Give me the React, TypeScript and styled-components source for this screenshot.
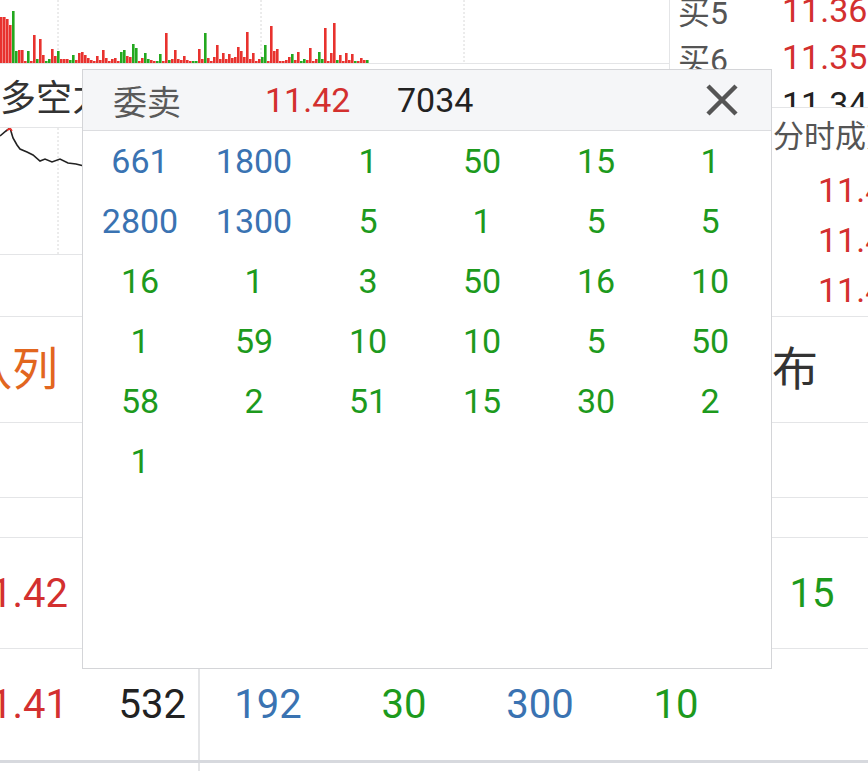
import styled, { createGlobalStyle } from 'styled-components';

const GlobalStyle = createGlobalStyle`
  * { box-sizing: border-box; }
  html, body { margin: 0; padding: 0; background: #fff; }
  body { font-family: Roboto, "Noto Sans CJK SC", sans-serif; }
`;

const RED = '#d3302f';
const GREEN = '#1d9a1d';
const BLUE = '#3a73b2';
const LINE = '#e4e5e7';

const Page = styled.div`
  position: relative;
  width: 868px;
  height: 771px;
  overflow: hidden;
  background: #fff;
`;

const TopArea = styled.div`
  display: flex;
  height: 317px;
  border-bottom: 1px solid ${LINE};
`;

const LeftChart = styled.div`
  width: 669px;
  display: flex;
  flex-direction: column;
`;

const VolumeChart = styled.div`
  height: 64px;
  border-bottom: 1px solid ${LINE};
  svg { display: block; }
`;

const LabelRow = styled.div`
  height: 64px;
  display: flex;
  align-items: center;
  padding-bottom: 2px;
  font-size: 36px;
  color: #333;
  white-space: nowrap;
  border-bottom: 1px solid ${LINE};
`;

const LineChart = styled.div`
  height: 127px;
  border-bottom: 1px solid ${LINE};
  svg { display: block; }
`;

const RightColumn = styled.div`
  flex: 1;
  display: flex;
  flex-direction: column;
  border-left: 1px solid ${LINE};
  min-width: 0;
`;

const BookList = styled.div`
  height: 108px;
  overflow: hidden;
  border-bottom: 1px solid ${LINE};
`;

const BookInner = styled.div`
  margin-top: -14px;
`;

const BookRow = styled.div`
  height: 47px;
  display: flex;
  align-items: center;
  padding-left: 8px;
  white-space: nowrap;
`;

const BookLabel = styled.span`
  width: 104px;
  font-size: 32px;
  color: #555;
`;

const Price = styled.span<{ $color: string; $size?: number }>`
  color: ${(p) => p.$color};
  font-size: ${(p) => p.$size ?? 34}px;
`;

const TradePanel = styled.div`
  padding-left: 103px;
  white-space: nowrap;
`;

const TradeTitle = styled.div`
  height: 57px;
  display: flex;
  align-items: center;
  padding-bottom: 6px;
  font-size: 31px;
  color: #555;
`;

const TradeRow = styled.div`
  height: 50px;
  display: flex;
  align-items: center;
  padding-left: 45px;
`;

const Row = styled.div<{ $h: number }>`
  height: ${(p) => p.$h}px;
  border-bottom: 1px solid ${LINE};
  display: flex;
  align-items: center;
  padding-bottom: 10px;
`;

const LeftTitle = styled.div`
  width: 58px;
  overflow: hidden;
  display: flex;
  justify-content: flex-end;
  white-space: nowrap;
  font-size: 46px;
  color: #e2661f;
`;

const RightTitle = styled.div`
  margin-left: auto;
  margin-right: 50px;
  white-space: nowrap;
  font-size: 46px;
  color: #333;
`;

const DataGrid = styled.div<{ $h: number; $thick?: boolean }>`
  height: ${(p) => p.$h}px;
  display: grid;
  grid-template-columns: 68px 132px repeat(5, 136px);
  border-bottom: ${(p) => (p.$thick ? 3 : 1)}px solid ${(p) => (p.$thick ? '#d7d9de' : LINE)};
`;

const Cell = styled.div<{ $align: 'left' | 'right' | 'center'; $color: string; $divider?: boolean }>`
  display: flex;
  align-items: center;
  justify-content: ${(p) => (p.$align === 'right' ? 'flex-end' : p.$align === 'left' ? 'flex-start' : 'center')};
  overflow: hidden;
  white-space: nowrap;
  font-size: 40px;
  color: ${(p) => p.$color};
  padding-right: ${(p) => (p.$divider ? 12 : 0)}px;
  border-right: ${(p) => (p.$divider ? `2px solid ${LINE}` : 'none')};
`;

/* popup */
const Popup = styled.div`
  position: absolute;
  left: 82px;
  top: 69px;
  width: 690px;
  height: 600px;
  background: #fff;
  border: 1px solid #d4d5d8;
  display: flex;
  flex-direction: column;
`;

const PopupHeader = styled.div`
  height: 61px;
  flex-shrink: 0;
  display: flex;
  align-items: center;
  padding-left: 30px;
  padding-right: 31px;
  background: #f5f6f8;
  border-bottom: 1px solid #dcdde0;
`;

const HeaderLabel = styled.span`
  width: 152px;
  font-size: 34px;
  color: #5a5a5a;
`;

const HeaderPrice = styled.span`
  width: 132px;
  font-size: 34px;
  color: ${RED};
`;

const HeaderVol = styled.span`
  flex: 1;
  font-size: 34px;
  color: #222;
`;

const CloseButton = styled.button`
  width: 36px;
  height: 36px;
  padding: 0;
  border: none;
  background: transparent;
  display: flex;
  align-items: center;
  justify-content: center;
`;

const PopupGrid = styled.div`
  display: grid;
  grid-template-columns: repeat(6, 114px);
  grid-auto-rows: 60px;
`;

const QueueCell = styled.div<{ $color: string }>`
  display: flex;
  align-items: center;
  justify-content: center;
  font-size: 34px;
  color: ${(p) => p.$color};
`;

const queue = [
  661, 1800, 1, 50, 15, 1,
  2800, 1300, 5, 1, 5, 5,
  16, 1, 3, 50, 16, 10,
  1, 59, 10, 10, 5, 50,
  58, 2, 51, 15, 30, 2,
  1,
];

const volColor = (v: number) => (v >= 100 ? BLUE : GREEN);

const spikes: Record<number, [number, 'r' | 'g']> = {
  0: [46, 'r'], 1: [46, 'r'], 2: [44, 'r'], 3: [38, 'r'], 4: [52, 'g'], 5: [12, 'g'],
  6: [13, 'r'], 7: [13, 'r'], 9: [12, 'g'], 11: [28, 'r'], 13: [24, 'r'],
  44: [19, 'g'], 45: [15, 'g'], 55: [30, 'r'], 68: [30, 'g'], 72: [18, 'r'],
  79: [16, 'r'], 82: [31, 'r'], 88: [18, 'g'], 90: [37, 'r'], 103: [15, 'r'],
  108: [35, 'r'], 111: [40, 'r'],
};

function buildBars() {
  let s = 17;
  const rnd = () => {
    s = (s * 9301 + 49297) % 233280;
    return s / 233280;
  };
  const bars: { x: number; h: number; c: string }[] = [];
  for (let i = 0; i < 123; i++) {
    const r1 = rnd();
    const r2 = rnd();
    const sp = spikes[i];
    const h = sp ? sp[0] : 2 + Math.round(r1 * r1 * 12);
    const c = sp ? (sp[1] === 'r' ? '#e8322e' : '#23a81f') : r2 < 0.3 ? '#23a81f' : '#e8322e';
    bars.push({ x: i * 3, h, c });
  }
  return bars;
}

const bars = buildBars();
const gridXs = [58, 261, 464];

function App() {
  return (
    <Page>
      <GlobalStyle />
      <TopArea>
        <LeftChart>
          <VolumeChart>
            <svg width="669" height="63">
              {gridXs.map((x) => (
                <line key={x} x1={x} y1={0} x2={x} y2={63} stroke="#d8d8d8" strokeDasharray="2 2" />
              ))}
              {bars.map((b) => (
                <rect key={b.x} x={b.x} y={63 - b.h} width={2.6} height={b.h} fill={b.c} />
              ))}
            </svg>
          </VolumeChart>
          <LabelRow>多空力量</LabelRow>
          <LineChart>
            <svg width="669" height="126">
              {gridXs.map((x) => (
                <line key={x} x1={x} y1={0} x2={x} y2={126} stroke="#d8d8d8" strokeDasharray="2 2" />
              ))}
              <path
                d="M0 8 L6 3 L10 0 L13 10 L17 17 L20 21 L27 24 L33 27 L40 33 L45 31 L52 34 L60 31 L68 35 L76 36 L84 38 L120 42 L180 48 L240 44 L300 52 L360 50 L420 58 L480 55 L540 60 L600 57 L660 62"
                fill="none"
                stroke="#222"
                strokeWidth={1.6}
              />
              <path d="M7 2.5 L10 0 L12 3" fill="none" stroke="#e8322e" strokeWidth={1.6} />
            </svg>
          </LineChart>
        </LeftChart>
        <RightColumn>
          <BookList>
            <BookInner>
              <BookRow>
                <BookLabel>买5</BookLabel>
                <Price $color={RED}>11.36</Price>
              </BookRow>
              <BookRow>
                <BookLabel>买6</BookLabel>
                <Price $color={RED}>11.35</Price>
              </BookRow>
              <BookRow>
                <BookLabel>买7</BookLabel>
                <Price $color="#222">11.34</Price>
              </BookRow>
            </BookInner>
          </BookList>
          <TradePanel>
            <TradeTitle>分时成交</TradeTitle>
            <TradeRow>
              <Price $color={RED}>11.42</Price>
            </TradeRow>
            <TradeRow>
              <Price $color={RED}>11.42</Price>
            </TradeRow>
            <TradeRow>
              <Price $color={RED}>11.41</Price>
            </TradeRow>
          </TradePanel>
        </RightColumn>
      </TopArea>

      <Row $h={106}>
        <LeftTitle>买卖队列</LeftTitle>
        <RightTitle>成交分布</RightTitle>
      </Row>
      <Row $h={75} />
      <Row $h={40} />
      <DataGrid $h={111}>
        <Cell $align="right" $color={RED}>11.42</Cell>
        <Cell $align="right" $color="#222"></Cell>
        <Cell $align="center" $color={GREEN}></Cell>
        <Cell $align="center" $color={GREEN}></Cell>
        <Cell $align="center" $color={GREEN}></Cell>
        <Cell $align="center" $color={GREEN}></Cell>
        <Cell $align="center" $color={GREEN}>15</Cell>
      </DataGrid>
      <DataGrid $h={114} $thick>
        <Cell $align="right" $color={RED}>11.41</Cell>
        <Cell $align="right" $color="#222" $divider>532</Cell>
        {[192, 30, 300, 10].map((v, i) => (
          <Cell key={i} $align="center" $color={volColor(v)}>{v}</Cell>
        ))}
        <Cell $align="center" $color={GREEN}></Cell>
      </DataGrid>
      <DataGrid $h={40}>
        <Cell $align="right" $color={RED}></Cell>
        <Cell $align="right" $color="#222" $divider></Cell>
      </DataGrid>

      <Popup>
        <PopupHeader>
          <HeaderLabel>委卖</HeaderLabel>
          <HeaderPrice>11.42</HeaderPrice>
          <HeaderVol>7034</HeaderVol>
          <CloseButton aria-label="关闭">
            <svg width="34" height="34" viewBox="0 0 34 34">
              <path d="M3 3 L31 31 M31 3 L3 31" stroke="#555" strokeWidth={4.5} strokeLinecap="butt" />
            </svg>
          </CloseButton>
        </PopupHeader>
        <PopupGrid>
          {queue.map((v, i) => (
            <QueueCell key={i} $color={volColor(v)}>{v}</QueueCell>
          ))}
        </PopupGrid>
      </Popup>
    </Page>
  );
}

export default App;
